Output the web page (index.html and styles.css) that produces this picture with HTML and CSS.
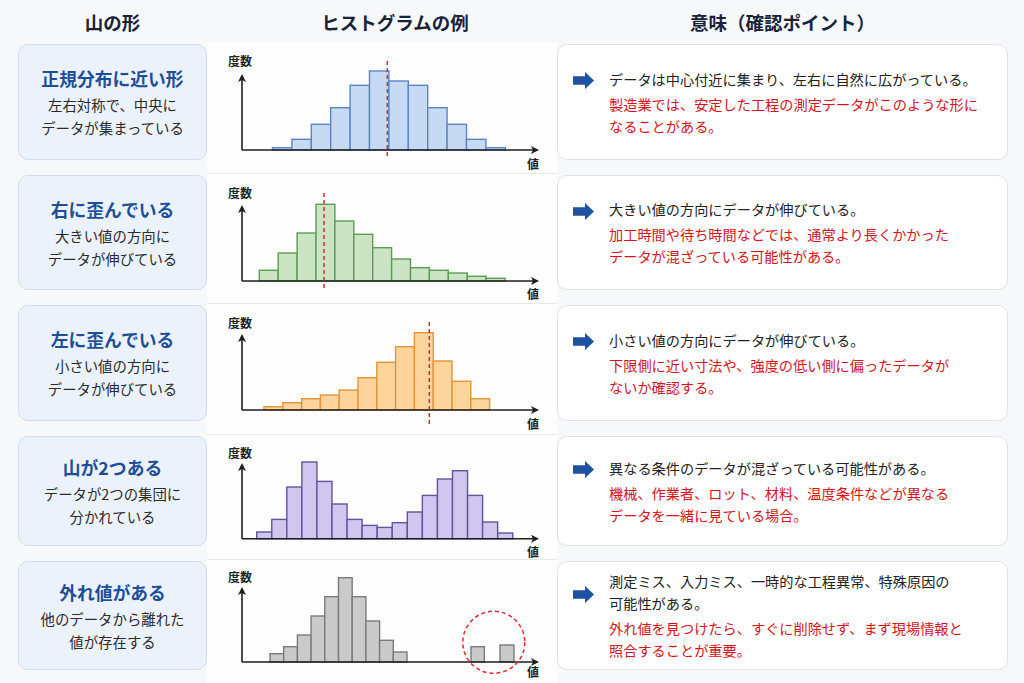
FILE: index.html
```html
<!DOCTYPE html>
<html lang="ja">
<head>
<meta charset="utf-8">
<title>ヒストグラムの形と意味</title>
<link rel="stylesheet" href="styles.css">
</head>
<body>
<div class="page">
  <div class="head">
    <h2>山の形</h2>
    <h2 class="h-mid">ヒストグラムの例</h2>
    <h2>意味（確認ポイント）</h2>
  </div>
  <div class="rows">
    <!-- Row 1 -->
    <div class="shape">
      <h3>正規分布に近い形</h3>
      <p>左右対称で、中央に<br>データが集まっている</p>
    </div>
    <div class="chart first">
      <svg width="350" height="131">
        <g class="bars blue">
          <rect x="65.5" y="104.7" width="19.4" height="2.3"/>
          <rect x="84.9" y="96.3" width="19.4" height="10.7"/>
          <rect x="104.3" y="81.3" width="19.4" height="25.7"/>
          <rect x="123.7" y="64.7" width="19.4" height="42.3"/>
          <rect x="143.1" y="42.3" width="19.4" height="64.7"/>
          <rect x="162.5" y="28" width="19.4" height="79"/>
          <rect x="181.9" y="38" width="19.4" height="69"/>
          <rect x="201.3" y="42.3" width="19.4" height="64.7"/>
          <rect x="220.7" y="64.7" width="19.4" height="42.3"/>
          <rect x="240.1" y="81.3" width="19.4" height="25.7"/>
          <rect x="259.5" y="96.3" width="19.4" height="10.7"/>
          <rect x="278.9" y="104.7" width="19.4" height="2.3"/>
        </g>
        <path class="axis" d="M35 107 V35 M35 107 H328"/>
        <path class="tip" d="M35 31 L31 39 L35 37 L39 39 Z M332 107 L324 103 L326 107 L324 111 Z"/>
        <line class="mark" x1="180.3" y1="18" x2="180.3" y2="116"/>
        <text class="lbl" x="33" y="23">度数</text>
        <text class="lbl" x="326" y="126">値</text>
      </svg>
    </div>
    <div class="point">
      <div class="lead">
        <svg class="arrow" width="21" height="17" viewBox="0 0 21 17"><path d="M0 4.3 H12 V0 L21 8.5 L12 17 V12.7 H0 Z"/></svg>
        <p>データは中心付近に集まり、左右に自然に広がっている。</p>
      </div>
      <p class="note">製造業では、安定した工程の測定データがこのような形に<br>なることがある。</p>
    </div>

    <!-- Row 2 -->
    <div class="shape">
      <h3>右に歪んでいる</h3>
      <p>大きい値の方向に<br>データが伸びている</p>
    </div>
    <div class="chart">
      <svg width="350" height="130">
        <g class="bars green">
          <rect x="52.3" y="96.3" width="18.9" height="10.7"/>
          <rect x="71.2" y="79" width="18.9" height="28"/>
          <rect x="90.1" y="59" width="18.9" height="48"/>
          <rect x="109" y="30.3" width="18.9" height="76.7"/>
          <rect x="127.9" y="47" width="18.9" height="60"/>
          <rect x="146.8" y="60.3" width="18.9" height="46.7"/>
          <rect x="165.7" y="73.7" width="18.9" height="33.3"/>
          <rect x="184.6" y="85" width="18.9" height="22"/>
          <rect x="203.5" y="93.7" width="18.9" height="13.3"/>
          <rect x="222.4" y="96.3" width="18.9" height="10.7"/>
          <rect x="241.3" y="99" width="18.9" height="8"/>
          <rect x="260.2" y="102.3" width="18.9" height="4.7"/>
          <rect x="279.1" y="104.3" width="18.9" height="2.7"/>
        </g>
        <path class="axis" d="M35 107 V35 M35 107 H328"/>
        <path class="tip" d="M35 31 L31 39 L35 37 L39 39 Z M332 107 L324 103 L326 107 L324 111 Z"/>
        <line class="mark" x1="117" y1="19" x2="117" y2="116"/>
        <text class="lbl" x="33" y="24">度数</text>
        <text class="lbl" x="326" y="125">値</text>
      </svg>
    </div>
    <div class="point">
      <div class="lead">
        <svg class="arrow" width="21" height="17" viewBox="0 0 21 17"><path d="M0 4.3 H12 V0 L21 8.5 L12 17 V12.7 H0 Z"/></svg>
        <p>大きい値の方向にデータが伸びている。</p>
      </div>
      <p class="note">加工時間や待ち時間などでは、通常より長くかかった<br>データが混ざっている可能性がある。</p>
    </div>

    <!-- Row 3 -->
    <div class="shape">
      <h3>左に歪んでいる</h3>
      <p>小さい値の方向に<br>データが伸びている</p>
    </div>
    <div class="chart">
      <svg width="350" height="131">
        <g class="bars orange">
          <rect x="57" y="102.7" width="18.8" height="3.3"/>
          <rect x="75.8" y="98.7" width="18.8" height="7.3"/>
          <rect x="94.6" y="94.7" width="18.8" height="11.3"/>
          <rect x="113.4" y="91" width="18.8" height="15"/>
          <rect x="132.2" y="86" width="18.8" height="20"/>
          <rect x="151" y="73.7" width="18.8" height="32.3"/>
          <rect x="169.8" y="58.3" width="18.8" height="47.7"/>
          <rect x="188.6" y="42.7" width="18.8" height="63.3"/>
          <rect x="207.4" y="28.7" width="18.8" height="77.3"/>
          <rect x="226.2" y="57" width="18.8" height="49"/>
          <rect x="245" y="77.3" width="18.8" height="28.7"/>
          <rect x="263.8" y="94.7" width="18.8" height="11.3"/>
        </g>
        <path class="axis" d="M35 106 V34 M35 106 H328"/>
        <path class="tip" d="M35 30 L31 38 L35 36 L39 38 Z M332 106 L324 102 L326 106 L324 110 Z"/>
        <line class="mark" x1="222.3" y1="18" x2="222.3" y2="123"/>
        <text class="lbl" x="33" y="24">度数</text>
        <text class="lbl" x="326" y="125">値</text>
      </svg>
    </div>
    <div class="point">
      <div class="lead">
        <svg class="arrow" width="21" height="17" viewBox="0 0 21 17"><path d="M0 4.3 H12 V0 L21 8.5 L12 17 V12.7 H0 Z"/></svg>
        <p>小さい値の方向にデータが伸びている。</p>
      </div>
      <p class="note">下限側に近い寸法や、強度の低い側に偏ったデータが<br>ないか確認する。</p>
    </div>

    <!-- Row 4 -->
    <div class="shape">
      <h3>山が2つある</h3>
      <p>データが2つの集団に<br>分かれている</p>
    </div>
    <div class="chart">
      <svg width="350" height="125">
        <g class="bars purple">
          <rect x="49.7" y="97" width="15.06" height="6.7"/>
          <rect x="64.76" y="84.4" width="15.06" height="19.3"/>
          <rect x="79.82" y="52" width="15.06" height="51.7"/>
          <rect x="94.88" y="27" width="15.06" height="76.7"/>
          <rect x="109.94" y="46.4" width="15.06" height="57.3"/>
          <rect x="125" y="69" width="15.06" height="34.7"/>
          <rect x="140.06" y="84.4" width="15.06" height="19.3"/>
          <rect x="155.12" y="90.4" width="15.06" height="13.3"/>
          <rect x="170.18" y="92.4" width="15.06" height="11.3"/>
          <rect x="185.24" y="87.7" width="15.06" height="16"/>
          <rect x="200.3" y="77" width="15.06" height="26.7"/>
          <rect x="215.36" y="60.4" width="15.06" height="43.3"/>
          <rect x="230.42" y="44" width="15.06" height="59.7"/>
          <rect x="245.48" y="35.7" width="15.06" height="68"/>
          <rect x="260.54" y="60.4" width="15.06" height="43.3"/>
          <rect x="275.6" y="87" width="15.06" height="16.7"/>
          <rect x="290.66" y="98" width="15.06" height="5.7"/>
        </g>
        <path class="axis" d="M35 103.7 V32 M35 103.7 H328"/>
        <path class="tip" d="M35 28 L31 36 L35 34 L39 36 Z M332 103.7 L324 99.7 L326 103.7 L324 107.7 Z"/>
        <text class="lbl" x="33" y="23">度数</text>
        <text class="lbl" x="326" y="122">値</text>
      </svg>
    </div>
    <div class="point">
      <div class="lead">
        <svg class="arrow" width="21" height="17" viewBox="0 0 21 17"><path d="M0 4.3 H12 V0 L21 8.5 L12 17 V12.7 H0 Z"/></svg>
        <p>異なる条件のデータが混ざっている可能性がある。</p>
      </div>
      <p class="note">機械、作業者、ロット、材料、温度条件などが異なる<br>データを一緒に見ている場合。</p>
    </div>

    <!-- Row 5 -->
    <div class="shape">
      <h3>外れ値がある</h3>
      <p>他のデータから離れた<br>値が存在する</p>
    </div>
    <div class="chart">
      <svg width="350" height="124">
        <g class="bars grey">
          <rect x="63" y="93.7" width="13.7" height="8.3"/>
          <rect x="76.7" y="86.7" width="13.7" height="15.3"/>
          <rect x="90.4" y="75" width="13.7" height="27"/>
          <rect x="104.1" y="56" width="13.7" height="46"/>
          <rect x="117.8" y="36.7" width="13.7" height="65.3"/>
          <rect x="131.5" y="17.7" width="13.7" height="84.3"/>
          <rect x="145.2" y="36.7" width="13.7" height="65.3"/>
          <rect x="158.9" y="61" width="13.7" height="41"/>
          <rect x="172.6" y="80.3" width="13.7" height="21.7"/>
          <rect x="186.3" y="92" width="13.7" height="10"/>
          <rect x="264" y="86.7" width="13.3" height="15.3"/>
          <rect x="293" y="85" width="14" height="17"/>
        </g>
        <path class="axis" d="M35 102 V31 M35 102 H328"/>
        <path class="tip" d="M35 27 L31 35 L35 33 L39 35 Z M332 102 L324 98 L326 102 L324 106 Z"/>
        <circle class="ring" cx="286.8" cy="82.3" r="31"/>
        <text class="lbl" x="33" y="22">度数</text>
        <text class="lbl" x="326" y="117">値</text>
      </svg>
    </div>
    <div class="point">
      <div class="lead">
        <svg class="arrow" width="21" height="17" viewBox="0 0 21 17"><path d="M0 4.3 H12 V0 L21 8.5 L12 17 V12.7 H0 Z"/></svg>
        <p>測定ミス、入力ミス、一時的な工程異常、特殊原因の<br>可能性がある。</p>
      </div>
      <p class="note">外れ値を見つけたら、すぐに削除せず、まず現場情報と<br>照合することが重要。</p>
    </div>
  </div>
</div>
</body>
</html>
```

FILE: styles.css
```css
* { box-sizing: border-box; }

html, body {
  margin: 0;
  padding: 0;
  background: #f7f8fa;
}

body {
  font-family: "Noto Sans CJK JP", "Noto Sans", sans-serif;
  color: #222;
}

.page {
  width: 1024px;
  height: 683px;
  padding: 0 16px 0 18px;
  overflow: hidden;
}

.head {
  display: grid;
  grid-template-columns: 189px 350px 451px;
  height: 42px;
  align-items: center;
}

.head h2 {
  margin: 0;
  font-size: 18.5px;
  font-weight: 700;
  color: #18233a;
  text-align: center;
  line-height: 26px;
  padding-top: 2px;
}

.head .h-mid {
  padding-left: 26px;
}

.rows {
  display: grid;
  grid-template-columns: 189px 350px 451px;
  grid-template-rows: 131px 130px 131px 125px 124px;
}

.shape {
  margin: 2px 0 13px;
  background: #ebf2fc;
  border: 1px solid #d2ddef;
  border-radius: 10px;
  display: flex;
  flex-direction: column;
  justify-content: center;
  align-items: center;
  text-align: center;
}

.shape h3 {
  margin: 0 0 2px;
  font-size: 17.8px;
  line-height: 26px;
  font-weight: 700;
  color: #1d4f98;
}

.shape p {
  margin: 0;
  font-size: 14.4px;
  line-height: 23px;
  color: #2b2b2b;
}

.chart {
  background: #fdfdfe;
  border-top: 1px solid #e4e7ee;
  overflow: hidden;
}

.chart.first {
  border-top-color: transparent;
}

.chart svg {
  display: block;
}

.bars rect {
  stroke-width: 1.4;
}

.blue rect { fill: #c7daf4; stroke: #5c86c2; }
.green rect { fill: #cbe4c4; stroke: #5e9b55; }
.orange rect { fill: #fdd49c; stroke: #e3953b; }
.purple rect { fill: #d1c6ef; stroke: #62569a; }
.grey rect { fill: #cacaca; stroke: #7b7b7b; }

.axis {
  fill: none;
  stroke: #1e1e1e;
  stroke-width: 1.6;
}

.tip {
  fill: #1e1e1e;
}

.mark {
  stroke: #e0282e;
  stroke-width: 1.5;
  stroke-dasharray: 4 3;
}

.ring {
  fill: none;
  stroke: #e0282e;
  stroke-width: 1.5;
  stroke-dasharray: 4 3;
}

.lbl {
  font-family: "Noto Sans CJK JP", sans-serif;
  font-size: 12px;
  font-weight: 700;
  fill: #222;
  text-anchor: middle;
}

.point {
  margin: 2px 0 13px;
  background: #ffffff;
  border: 1px solid #dfe2ea;
  border-radius: 10px;
  display: flex;
  flex-direction: column;
  justify-content: center;
  padding-left: 15px;
}

.lead {
  display: flex;
  align-items: center;
  gap: 15px;
}

.arrow {
  flex: none;
  margin-top: 4px;
  fill: #1f52a0;
}

.lead p,
.note {
  margin: 0;
  font-size: 14.2px;
  line-height: 22px;
  white-space: nowrap;
}

.lead p {
  color: #222;
}

.note {
  margin: 3px 0 0 36px;
  color: #d3141d;
}
```
